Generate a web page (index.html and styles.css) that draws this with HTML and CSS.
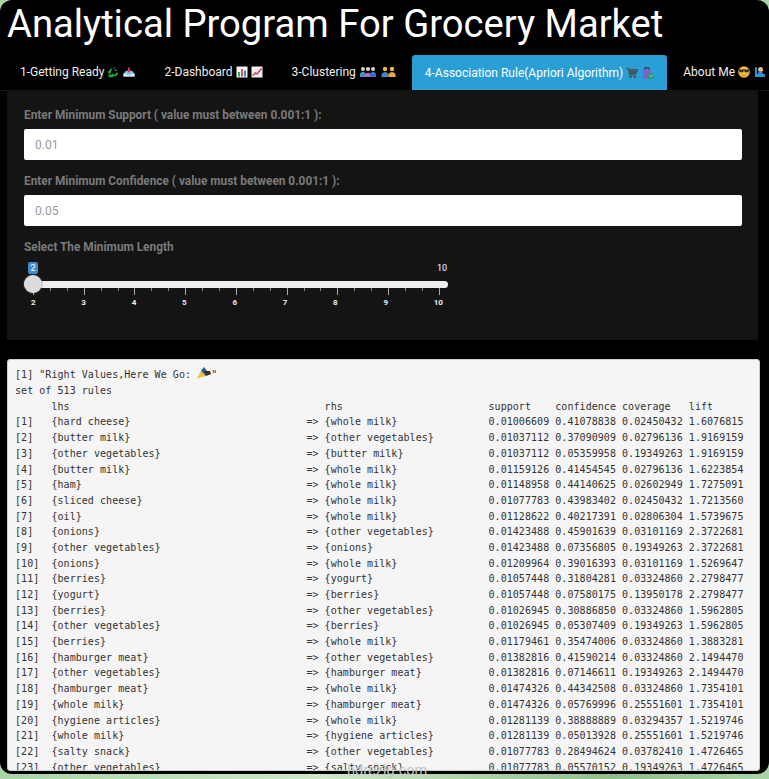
FILE: index.html
```html
<!DOCTYPE html>
<html lang="en">
<head>
<meta charset="utf-8">
<title>Analytical Program For Grocery Market</title>
<link rel="stylesheet" href="styles.css">
</head>
<body>
<div class="app">
  <h1 class="title">Analytical Program For Grocery Market</h1>
  <nav class="tabs">
    <a class="tab">1-Getting Ready
      <svg class="ico" viewBox="0 0 12 12"><path d="M6 .5 8.200 4 6.800 4.800 9 5.200 10 3.400 8.700 4 7.400 1.200A1.500 1.500 0 0 0 6 .5ZM3.900 2 2 5.300.6 4.800l1 3L4.800 7 3.500 6.500 5 3.500ZM.8 8.500 2.300 11.200H5.200V8.500ZM6 8.500V7L4.300 9.400 6 11.800V10.300H9.300L11.200 7.500 9.500 6.300 8.500 8.500Z" fill="#27a83a"/></svg>
      <svg class="ico tray" viewBox="0 0 13 12"><path d="M.5 8 3 5h7l2.500 3v3H.5Z" fill="#8ec8ea"/><path d="M.5 8h3.500l1 1.500h3L9 8h3.500v3H.5Z" fill="#d3ecf8"/><path d="M5.500 1h2v3h1.500L6.500 7 4 4h1.500Z" fill="#c9405a"/></svg>
    </a>
    <a class="tab">2-Dashboard<svg class="ico" viewBox="0 0 12 12"><path d="M.5.500h11v11H.500Z" fill="#f2f4f6"/><path d="M2 6h2v4.500H2Z" fill="#3aa655"/><path d="M5 3h2v7.500H5Z" fill="#e2554e"/><path d="M8 4.500h2v6H8Z" fill="#3a8ed0"/></svg>
      <svg class="ico near" viewBox="0 0 12 12"><path d="M.5.500h11v11H.500Z" fill="#eef0f2"/><path d="M1.500 9.500 4.500 7 6 8l4.500-5.500" fill="none" stroke="#d9424e" stroke-width="1.500"/></svg>
    </a>
    <a class="tab">3-Clustering<svg class="ico wide" viewBox="0 0 18 12"><circle cx="4" cy="3" r="2" fill="#d9d2c4"/><path d="M1 11V7.500Q4 4 7 7.500V11Z" fill="#4d8bc9"/><circle cx="9" cy="3" r="2" fill="#e4d6c8"/><path d="M6.500 11V8Q9 5 11.500 8V11Z" fill="#b06bc0"/><circle cx="14" cy="3" r="2" fill="#d9d2c4"/><path d="M11 11V7.500Q14 4 17 7.500V11Z" fill="#3f6fc0"/></svg>
      <svg class="ico wide2" viewBox="0 0 15 12"><circle cx="4" cy="3" r="2.200" fill="#f5b93e"/><path d="M.5 11V8Q4 4 7.500 8V11Z" fill="#3d8ad0"/><circle cx="11" cy="3" r="2.200" fill="#f5b93e"/><path d="M7.500 11V8Q11 4 14.500 8V11Z" fill="#f2a530"/></svg>
    </a>
    <a class="tab active">4-Association Rule(Apriori Algorithm)<svg class="ico" viewBox="0 0 13 12"><path d="M.5 1h2L4 8h6.500M3 2.500h9.500L11 6.500H3.800" fill="none" stroke="#46525c" stroke-width="1.400"/><path d="M3.500 3.500h8L10.500 6H4Z" fill="#46525c"/><circle cx="5" cy="10.200" r="1.200" fill="#3a4650"/><circle cx="9.500" cy="10.200" r="1.200" fill="#3a4650"/></svg>
      <svg class="ico" viewBox="0 0 13 13"><path d="M1 3h8.500v10H1Z" fill="#8a5cc9"/><path d="M3 3V1h4.500v2" fill="none" stroke="#263f58" stroke-width="1.200"/><path d="M6 7h7v6H6Z" fill="#2c9a78"/><path d="M8 8.500 10 11l2-3" fill="none" stroke="#6ed49a"/></svg>
    </a>
    <a class="tab">About Me<svg class="ico" viewBox="0 0 12 12"><circle cx="6" cy="6" r="5.800" fill="#f5b93e"/><path d="M.8 3.500h10.400L10.500 6.200H7.200L6 4.800 4.800 6.200H1.500Z" fill="#31302c"/><path d="M3 8q3 2.500 6 0Q6 11.500 3 8Z" fill="#7c4a1e"/></svg>
      <svg class="ico" viewBox="0 0 12 12"><path d="M1 11V1.500L3 1V8H11V11Z" fill="#2f93d8"/><circle cx="6.500" cy="3.500" r="2.500" fill="#eab676"/><path d="M3.500 8 5 5.500H8L9 8Z" fill="#3d8ad0"/></svg>
    </a>
  </nav>
  <form class="panel">
    <label class="lbl">Enter Minimum Support ( value must between 0.001:1 ):</label>
    <input class="num" placeholder="0.01">
    <label class="lbl">Enter Minimum Confidence ( value must between 0.001:1 ):</label>
    <input class="num" placeholder="0.05">
    <label class="lbl">Select The Minimum Length</label>
    <div class="slider">
      <div class="slider-top"><span class="from">2</span><span class="to">10</span></div>
      <div class="track"><span class="handle"></span></div>
      <div class="ticks">
        <i class="maj"></i><i></i><i></i><i class="maj"></i><i></i><i></i><i class="maj"></i><i></i><i></i><i class="maj"></i><i></i><i></i><i class="maj"></i><i></i><i></i><i class="maj"></i><i></i><i></i><i class="maj"></i><i></i><i></i><i class="maj"></i><i></i><i></i><i class="maj"></i>
      </div>
      <div class="nums"><span>2</span><span>3</span><span>4</span><span>5</span><span>6</span><span>7</span><span>8</span><span>9</span><span>10</span></div>
    </div>
  </form>
  <pre class="out">[1] "Right Values,Here We Go: <svg class="cone" viewBox="0 0 14 13"><path d="M0 11.500 4 4l5 5Z" fill="#f0c040"/><path d="M4 4 7 0l3 4L9 9Z" fill="#1f5f9a"/><path d="M7 4h6l1 3-5 2Z" fill="#4a2a20"/></svg>"
set of 513 rules
      lhs                                          rhs                        support    confidence coverage   lift
[1]   {hard cheese}                             => {whole milk}               0.01006609 0.41078838 0.02450432 1.6076815
[2]   {butter milk}                             => {other vegetables}         0.01037112 0.37090909 0.02796136 1.9169159
[3]   {other vegetables}                        => {butter milk}              0.01037112 0.05359958 0.19349263 1.9169159
[4]   {butter milk}                             => {whole milk}               0.01159126 0.41454545 0.02796136 1.6223854
[5]   {ham}                                     => {whole milk}               0.01148958 0.44140625 0.02602949 1.7275091
[6]   {sliced cheese}                           => {whole milk}               0.01077783 0.43983402 0.02450432 1.7213560
[7]   {oil}                                     => {whole milk}               0.01128622 0.40217391 0.02806304 1.5739675
[8]   {onions}                                  => {other vegetables}         0.01423488 0.45901639 0.03101169 2.3722681
[9]   {other vegetables}                        => {onions}                   0.01423488 0.07356805 0.19349263 2.3722681
[10]  {onions}                                  => {whole milk}               0.01209964 0.39016393 0.03101169 1.5269647
[11]  {berries}                                 => {yogurt}                   0.01057448 0.31804281 0.03324860 2.2798477
[12]  {yogurt}                                  => {berries}                  0.01057448 0.07580175 0.13950178 2.2798477
[13]  {berries}                                 => {other vegetables}         0.01026945 0.30886850 0.03324860 1.5962805
[14]  {other vegetables}                        => {berries}                  0.01026945 0.05307409 0.19349263 1.5962805
[15]  {berries}                                 => {whole milk}               0.01179461 0.35474006 0.03324860 1.3883281
[16]  {hamburger meat}                          => {other vegetables}         0.01382816 0.41590214 0.03324860 2.1494470
[17]  {other vegetables}                        => {hamburger meat}           0.01382816 0.07146611 0.19349263 2.1494470
[18]  {hamburger meat}                          => {whole milk}               0.01474326 0.44342508 0.03324860 1.7354101
[19]  {whole milk}                              => {hamburger meat}           0.01474326 0.05769996 0.25551601 1.7354101
[20]  {hygiene articles}                        => {whole milk}               0.01281139 0.38888889 0.03294357 1.5219746
[21]  {whole milk}                              => {hygiene articles}         0.01281139 0.05013928 0.25551601 1.5219746
[22]  {salty snack}                             => {other vegetables}         0.01077783 0.28494624 0.03782410 1.4726465
[23]  {other vegetables}                        => {salty snack}              0.01077783 0.05570152 0.19349263 1.4726465</pre>
</div>
<div class="mark">hdrezig.com</div>
</body>
</html>
```
FILE: styles.css
```css
* { box-sizing: border-box; }
html, body { margin: 0; padding: 0; }
body {
  width: 769px;
  height: 779px;
  overflow: hidden;
  background: linear-gradient(90deg, #a9d6a6 0%, #cfe8c8 42%, #8fbf8b 80%, #a9d6a6 100%);
  font-family: Roboto, "Liberation Sans", sans-serif;
}
.app {
  height: 774px;
  background: #000;
  border-radius: 12px;
  overflow: hidden;
}
.title {
  margin: 0;
  height: 55px;
  padding: 2px 0 0 7px;
  font-size: 38.2px;
  line-height: 44px;
  font-weight: 400;
  color: #fff;
  white-space: nowrap;
}
.tabs {
  display: flex;
  height: 36px;
  padding-left: 7px;
  border-bottom: 1px solid #1a1a1a;
}
.tab {
  display: flex;
  align-items: center;
  height: 34px;
  padding: 0 13px;
  margin-right: 3px;
  font-size: 12px;
  color: #eee;
  white-space: nowrap;
  border-radius: 3px 3px 0 0;
}
.tab.active { background: #2a9fd6; color: #fff; height: 35px; }
.ico {
  width: 12px;
  height: 12px;
  margin-left: 3px;
  flex: none;
}
.wide { width: 18px; }
.ico + .ico { margin-left: 4px; }
.ico + .near { margin-left: 3px; }
.ico + .wide2 { width: 15px; margin-left: 4px; }
.panel {
  margin: -1px 11px 0 7px;
  height: 250px;
  background: #141414;
  padding: 17px 16px 0 17px;
  display: flex;
  flex-direction: column;
}
.lbl {
  font-size: 11.85px;
  line-height: 16px;
  font-weight: 700;
  color: #7a7a7a;
  height: 22px;
}
.num {
  height: 31px;
  flex: none;
  border: 0;
  border-radius: 2px;
  background: #fff;
  padding: 0 11px;
  margin-bottom: 13px;
  font: 12px Roboto, sans-serif;
  color: #333;
}
.num::placeholder { color: #999; opacity: 1; }
.slider { width: 424px; margin-top: 1px; }
.slider-top {
  display: flex;
  justify-content: space-between;
  height: 16px;
  padding: 0 1px 0 4px;
  font-size: 9px;
  line-height: 13px;
  color: #fff;
  font-weight: 400;
}
.from {
  width: 10px;
  height: 12px;
  background: #428bca;
  border-radius: 2px;
  text-align: center;
}
.track {
  position: relative;
  height: 7px;
  margin-top: 3px;
  background: #eee;
  border-radius: 4px;
}
.handle {
  position: absolute;
  left: 0;
  top: -6px;
  width: 18px;
  height: 18px;
  border-radius: 50%;
  background: #dcdcdc;
  box-shadow: 0 0 2px #777;
}
.ticks {
  display: flex;
  justify-content: space-between;
  align-items: flex-start;
  height: 8px;
  margin: 0 8px 0 9px;
}
.ticks i { display: block; width: 1px; height: 3px; background: #888; }
.ticks i.maj { height: 7px; background: #aaa; }
.nums {
  display: flex;
  justify-content: space-between;
  margin: 1px 5px 0 7px;
  font-size: 8px;
  line-height: 11px;
  font-weight: 700;
  color: #eee;
}
.out {
  margin: 19px 9px 0 7px;
  height: 412px;
  padding: 7.400px 0 0 7px;
  background: #f5f5f5;
  border: 1px solid #ccc;
  border-radius: 3px;
  font-family: "DejaVu Sans Mono", "Liberation Mono", monospace;
  font-size: 10px;
  letter-spacing: .05px;
  line-height: 15.68px;
  color: #333;
  overflow: hidden;
}
.cone { width: 14px; height: 13px; vertical-align: -2px; }
.mark {
  position: absolute;
  left: 347px;
  top: 761px;
  font-size: 14.6px;
  line-height: 18px;
  color: #c4c4c4;
}
```
